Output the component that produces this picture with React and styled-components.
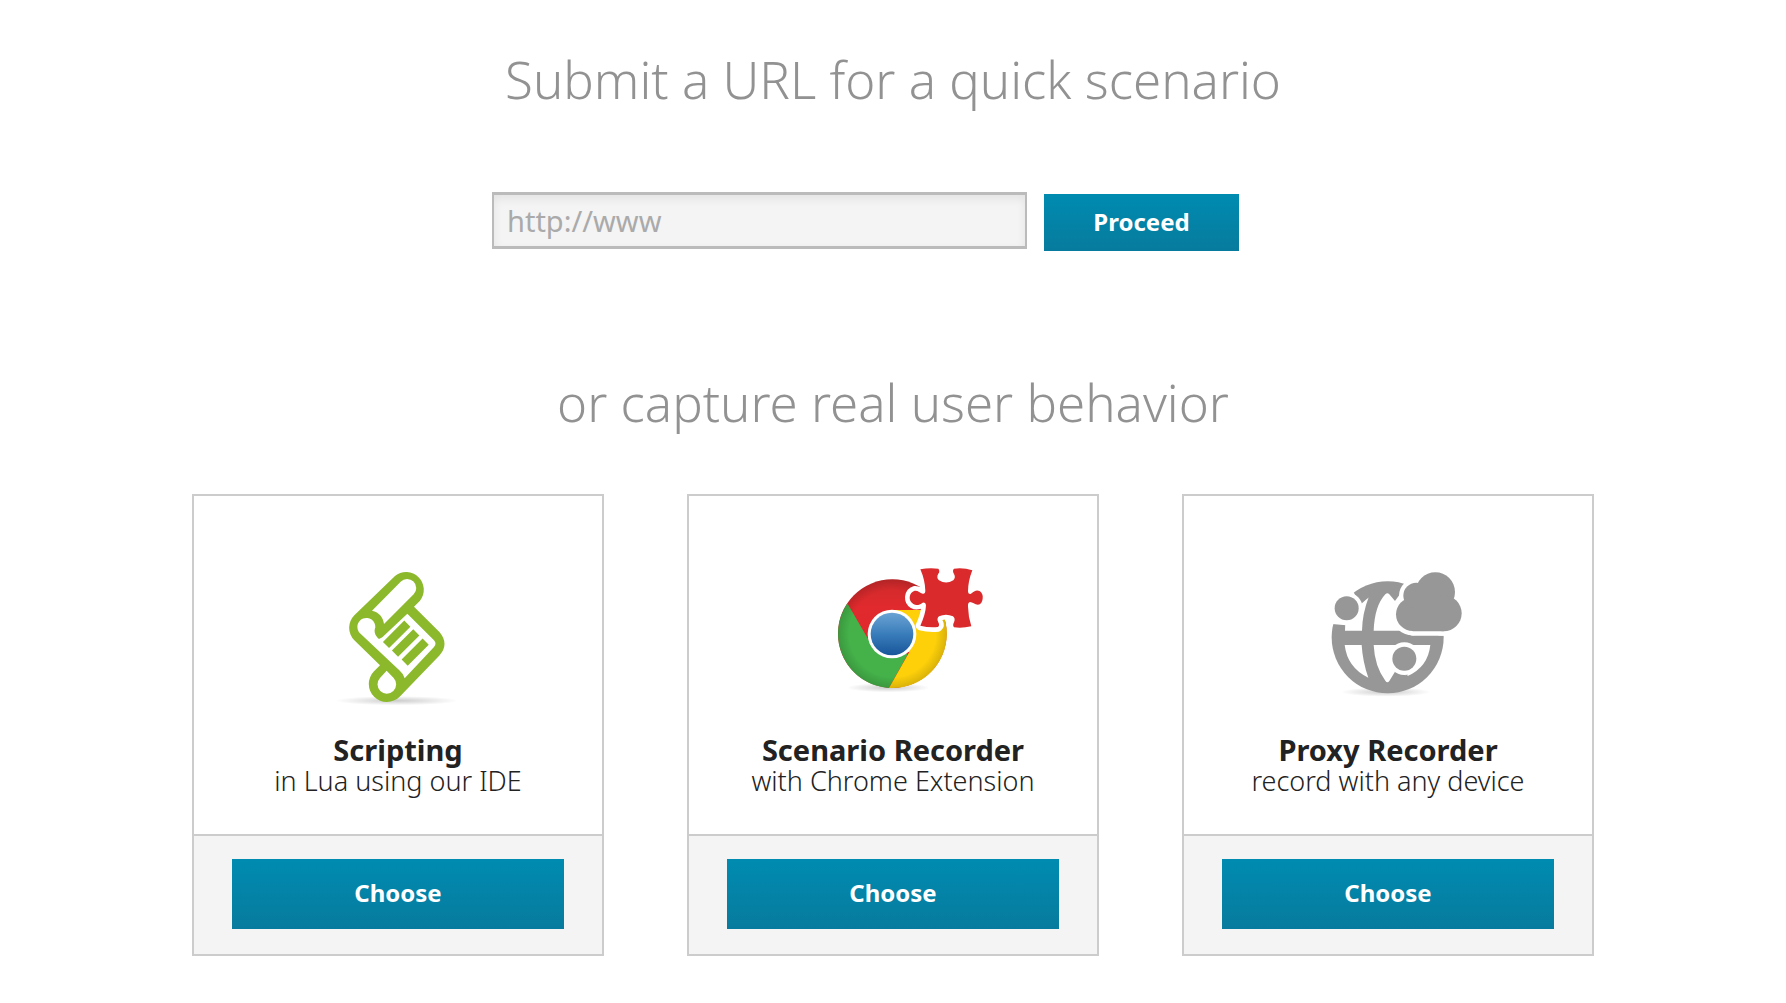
import React from 'react';
import styled, { createGlobalStyle } from 'styled-components';

const GlobalStyle = createGlobalStyle`
  *, *::before, *::after { box-sizing: border-box; }
  body {
    margin: 0;
    background: #fff;
    color: #222;
    font-family: "Noto Sans", "Open Sans", sans-serif;
  }
`;

const Page = styled.main`
  display: flex;
  flex-direction: column;
  align-items: center;
  padding: 49px 24px 47px;
`;

const Heading = styled.h1`
  margin: 0;
  color: #929292;
  font-size: 51px;
  font-weight: 300;
  line-height: 60px;
  text-align: center;
`;

const UrlForm = styled.form`
  display: flex;
  align-items: flex-end;
  gap: 17px;
  width: 100%;
  max-width: 802px;
  margin: 83px 0 121px;
`;

const UrlField = styled.label`
  flex: 0 1 535px;
  min-width: 0;
  padding-bottom: 2px;
`;

const UrlInput = styled.input`
  display: block;
  width: 100%;
  height: 57px;
  padding: 0 13px;
  border: solid #bbb;
  border-width: 3px 2px;
  border-radius: 0;
  background: #f4f4f4;
  box-shadow: inset 0 4px 10px rgba(0, 0, 0, 0.07);
  color: #555;
  font-family: inherit;
  font-size: 29px;
  font-weight: 400;
  outline: none;

  &::placeholder {
    color: #aaa;
    opacity: 1;
  }
`;

const Button = styled.button`
  flex: none;
  width: ${(p) => (p.$wide ? '100%' : '195px')};
  height: ${(p) => (p.$wide ? '70px' : '57px')};
  padding: 0 0 ${(p) => (p.$wide ? '4px' : '2px')};
  border: 0;
  background: linear-gradient(#008bb1, #077b9d);
  color: #fff;
  font-family: inherit;
  font-size: 24px;
  font-weight: 700;
  cursor: pointer;
`;

const CardGrid = styled.section`
  display: grid;
  grid-template-columns: repeat(3, minmax(0, 1fr));
  gap: 83px;
  width: 100%;
  max-width: 1402px;
  margin-top: 62px;
`;

const Card = styled.article`
  display: flex;
  flex-direction: column;
  border: 2px solid #ccc;
  background: #fff;
`;

const CardBody = styled.div`
  display: flex;
  flex: 1;
  flex-direction: column;
  align-items: center;
  padding: 54px 16px 37px;
  text-align: center;
`;

const Art = styled.svg`
  width: 200px;
  height: 165px;
  margin-bottom: 20px;
`;

const CardTitle = styled.h2`
  margin: 0;
  font-size: 29px;
  font-weight: 700;
  line-height: 30px;
`;

const CardText = styled.p`
  margin: 0;
  color: #222;
  font-size: 27px;
  font-weight: 300;
  line-height: 32px;
`;

const CardFooter = styled.footer`
  padding: 23px 38px 25px;
  border-top: 2px solid #ccc;
  background: #f4f4f4;
`;

function Shadow({ id, cx, cy, rx }) {
  return (
    <>
      <radialGradient id={id}>
        <stop offset="0" stopColor="#000" stopOpacity="0.2" />
        <stop offset="0.5" stopColor="#000" stopOpacity="0.1" />
        <stop offset="1" stopColor="#000" stopOpacity="0" />
      </radialGradient>
      <ellipse cx={cx} cy={cy} rx={rx} ry="14" fill={`url(#${id})`} />
    </>
  );
}

function ScrollArt() {
  return (
    <Art viewBox="-66 0 600 495" aria-hidden="true">
      <Shadow id="scrollShadow" cx="230" cy="452" rx="185" />
      <path
        fill="#8cb92c"
        d="M225 78A53 53 0 0 1 300 152L282 170L359 247Q388 282 359 316L239 440A54 54 0 0 1 162 364L180 346L103 271A53 53 0 0 1 103 196Z"
      />
      <path
        fill="#fff"
        d="M242 95A27 27 0 0 1 281 133L192 222C190 202 178 187 156 182Z"
      />
      <path
        fill="#fff"
        d="M120 250A27 27 0 1 1 166 232C161 246 165 257 177 267L187 262L262 191L342 271Q351 281 342 291L254 385Q249 370 238 361Z"
      />
      <path fill="#fff" d="M200 362L221 384A28 28 0 1 1 180 384Z" />
      <path
        fill="none"
        stroke="#8cb92c"
        strokeWidth="26"
        d="M262 221L198 285M289 247L225 311M317 275L254 338"
      />
    </Art>
  );
}

function BrowserArt() {
  return (
    <Art viewBox="-81 0 600 495" aria-hidden="true">
      <defs>
        <linearGradient id="redPart" x1="0" y1="0" x2="0" y2="1">
          <stop offset="0" stopColor="#cf2a2c" />
          <stop offset="0.25" stopColor="#e02a2d" />
          <stop offset="1" stopColor="#e3262a" />
        </linearGradient>
        <radialGradient id="rim" cx="217" cy="251" r="163" gradientUnits="userSpaceOnUse">
          <stop offset="0.8" stopColor="#000" stopOpacity="0" />
          <stop offset="1" stopColor="#000" stopOpacity="0.14" />
        </radialGradient>
        <linearGradient id="bluePart" x1="0" y1="0" x2="0" y2="1">
          <stop offset="0" stopColor="#6ba3d3" />
          <stop offset="0.5" stopColor="#3a7dbb" />
          <stop offset="1" stopColor="#17569a" />
        </linearGradient>
      </defs>
      <Shadow id="browserShadow" cx="205" cy="413" rx="125" />
      <circle cx="217" cy="251" r="163" fill="url(#redPart)" />
      <path fill="#44b149" d="M82 160L146 270L217 251L262 315L207 414A163 163 0 0 1 82 160Z" />
      <path fill="#fdd00a" d="M217 180H364A163 163 0 0 1 207 414L268 306L217 251Z" />
      <circle cx="217" cy="251" r="163" fill="url(#rim)" />
      <circle cx="216" cy="252" r="73" fill="#fff" />
      <circle cx="216" cy="252" r="64" fill="url(#bluePart)" />
      <path
        fill="#da2a2c"
        stroke="#fff"
        strokeWidth="28"
        strokeLinejoin="round"
        paintOrder="stroke"
        d="M301 58Q328 52 355 56Q361 63 355 71Q348 82 357 91Q378 104 400 91Q408 82 402 72Q396 62 402 56Q430 52 457 61Q444 94 444 124Q444 134 453 131C462 124 470 118 480 124Q490 132 488 146Q486 162 474 164C464 164 458 156 450 156Q443 158 444 170Q445 202 454 229Q428 235 402 232Q397 226 402 217Q407 205 399 199Q378 190 357 199Q349 206 355 217Q360 226 354 231Q328 234 301 227Q317 192 318 166Q317 155 308 158C299 164 290 168 280 162Q268 154 269 141Q271 126 284 122C294 121 300 128 308 131Q316 132 316 122Q315 90 301 58Z"
      />
    </Art>
  );
}

function CloudShape(props) {
  return (
    <g {...props}>
      <circle cx="308" cy="178" r="50" />
      <circle cx="319" cy="122" r="39" />
      <circle cx="376" cy="111" r="59" />
      <circle cx="401" cy="175" r="54" />
      <path d="M308 128H401V229H308Z" />
    </g>
  );
}

function GlobeArt() {
  return (
    <Art viewBox="-66 -15 600 495" aria-hidden="true">
      <Shadow id="globeShadow" cx="228" cy="411" rx="135" />
      <circle cx="233" cy="247" r="168" fill="#979797" />
      <path
        fill="#fff"
        d="M191 227Q194 152 226 118Q232 112 238 118L255 138L275 110L330 227ZM105 227L106 200L150 150L176 127Q157 176 156 227ZM104 270H155Q158 320 175 368Q112 338 104 270ZM191 270H361Q354 336 293 363L255 350L238 378Q232 386 226 377Q194 334 191 270Z"
      />
      <path fill="#fff" d="M58 206L108 211L150 150L131 112L70 120Z" />
      <path fill="#979797" d="M253 346H296L292 364L256 352Z" />
      <path fill="#979797" d="M248 270Q283 248 318 270Z" />
      <path fill="#979797" d="M134 114L155 142L178 126L180 100L160 98Z" />
      <circle cx="110" cy="160" r="48" fill="#fff" />
      <circle cx="110" cy="160" r="36" fill="#979797" />
      <circle cx="283" cy="311" r="49" fill="#fff" />
      <circle cx="283" cy="311" r="36" fill="#979797" />
      <CloudShape fill="#fff" stroke="#fff" strokeWidth="26" strokeLinejoin="round" />
      <CloudShape fill="#979797" />
    </Art>
  );
}

const options = [
  { title: 'Scripting', text: 'in Lua using our IDE', Picture: ScrollArt },
  { title: 'Scenario Recorder', text: 'with Chrome Extension', Picture: BrowserArt },
  { title: 'Proxy Recorder', text: 'record with any device', Picture: GlobeArt },
];

export default function App() {
  return (
    <>
      <GlobalStyle />
      <Page>
        <Heading id="url-heading">Submit a URL for a quick scenario</Heading>
        <UrlForm onSubmit={(e) => e.preventDefault()}>
          <UrlField>
            <UrlInput
              type="text"
              name="url"
              placeholder="http://www"
              aria-labelledby="url-heading"
            />
          </UrlField>
          <Button type="submit">Proceed</Button>
        </UrlForm>
        <Heading as="h2">or capture real user behavior</Heading>
        <CardGrid>
          {options.map(({ title, text, Picture }) => (
            <Card key={title}>
              <CardBody>
                <Picture />
                <CardTitle>{title}</CardTitle>
                <CardText>{text}</CardText>
              </CardBody>
              <CardFooter>
                <Button type="button" $wide>Choose</Button>
              </CardFooter>
            </Card>
          ))}
        </CardGrid>
      </Page>
    </>
  );
}
